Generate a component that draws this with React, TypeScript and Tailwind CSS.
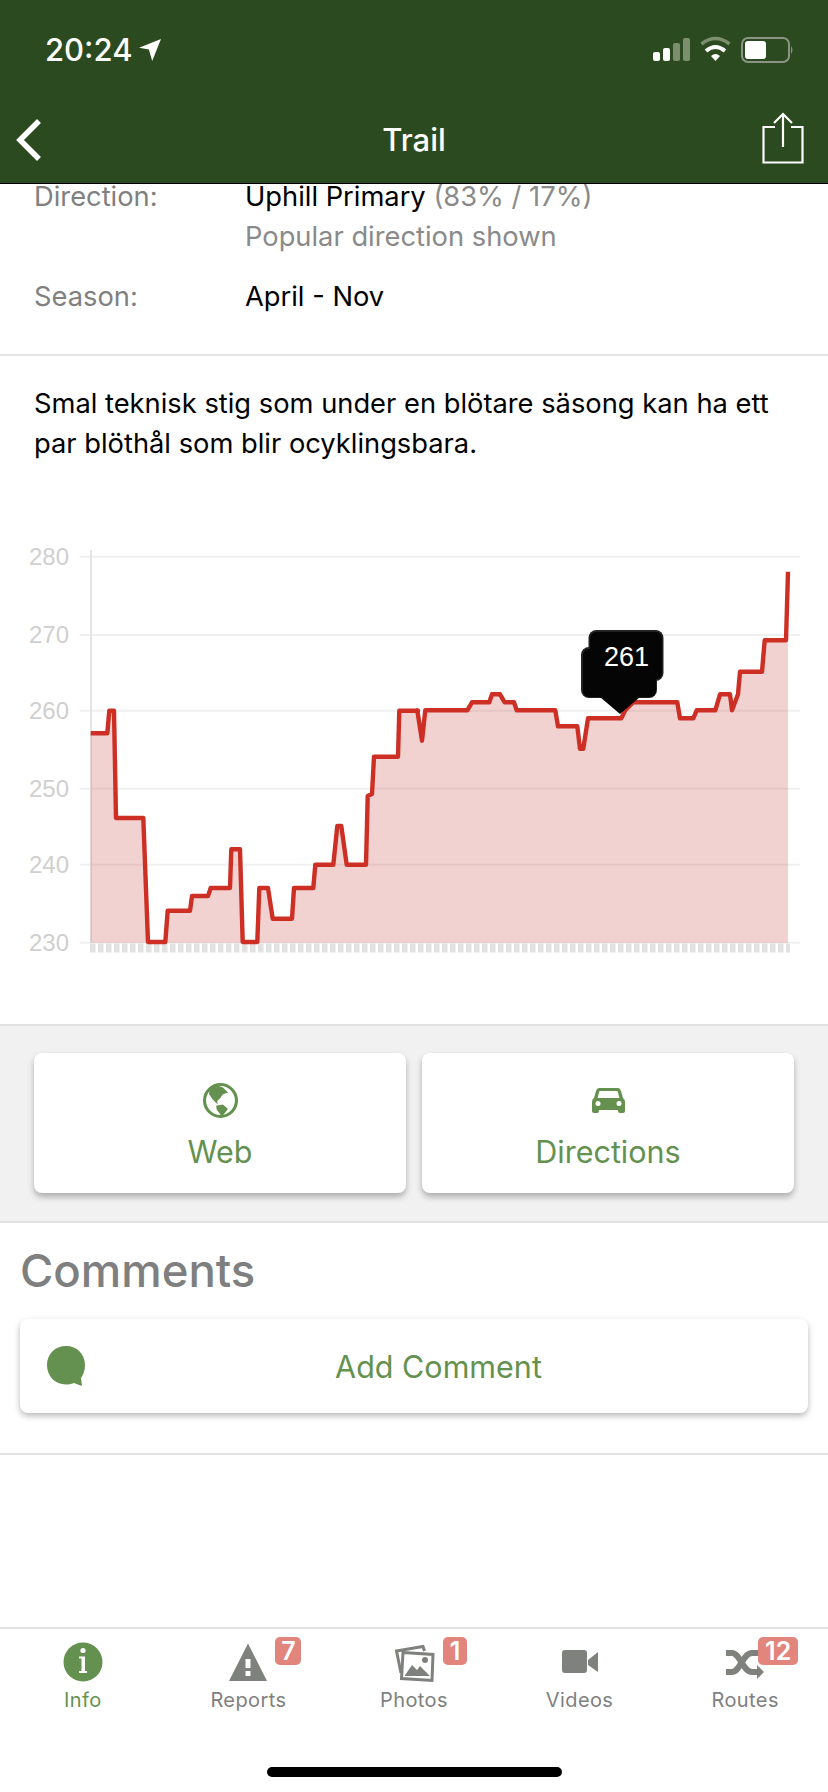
const left: [number, number][] = [[272,610],[322,610],[328,542],[342,542],[348,864],[430,864],[444,1236],[496,1236],[503,1142],[570,1142],[576,1098],[624,1098],[632,1074],[690,1074],[694,958],[720,958],[728,1236],[772,1236],[778,1074],[804,1074],[818,1166],[876,1166],[882,1074],[940,1074],[946,1004],[1000,1004],[1012,888],[1024,888],[1040,1004],[1098,1004],[1103,798],[1116,792],[1122,680],[1194,680],[1198,542],[1254,542]];
const right: [number, number][] = [[22,541],[36,632],[46,541],[172,541],[186,517],[238,517],[246,493],[270,493],[284,517],[312,517],[320,541],[436,541],[444,589],[502,589],[510,656],[520,656],[534,565],[634,565],[646,541],[670,517],[802,517],[810,565],[850,565],[860,541],[916,541],[930,493],[960,493],[966,541],[984,493],[990,425],[1056,425],[1064,331],[1128,331],[1134,125]];
const pts = [
  ...left.map(([x, y]) => [x / 3, 530 + y / 3]),
  ...right.map(([x, y]) => [410 + x / 3, 530 + y / 3]),
];
const line = pts.map(([x, y]) => `${x.toFixed(1)},${y.toFixed(1)}`).join(" ");
const area = `M90.7,942.7 L${line.replace(/ /g, " L")} L788,942.7 Z`;
const grid: [string, number][] = [["280", 556.7], ["270", 635], ["260", 710.7], ["250", 788.7], ["240", 864.7], ["230", 942.7]];

function Chart() {
  return (
    <svg viewBox="0 466 828 558" className="block w-[828px] h-[558px] mt-[2px]">
      {grid.map(([label, y]) => (
        <g key={label}>
          <line x1="80" x2="800" y1={y} y2={y} stroke="#f0f0f0" strokeWidth="2" />
          <text x="29" y={y + 8} fontSize="24" fill="#cfcfcf" fontFamily="'Liberation Sans', sans-serif">{label}</text>
        </g>
      ))}
      <line x1="91" x2="91" y1="550" y2="943" stroke="#e4e4e4" strokeWidth="2" />
      <line x1="90" x2="790" y1="948" y2="948" stroke="#e2e2e2" strokeWidth="9" strokeDasharray="5.5 2.5" />
      <path d={area} fill="#c02a25" fillOpacity="0.21" />
      <polyline points={line} fill="none" stroke="#cd2f25" strokeWidth="4.4" strokeLinejoin="round" />
      <rect x="581" y="647" width="76" height="51" rx="8" fill="#222222" />
      <rect x="588.5" y="630" width="75" height="51" rx="8" fill="#222222" />
      <rect x="583" y="649" width="73" height="48" rx="6" fill="#050505" />
      <rect x="590" y="632" width="72" height="47" rx="6" fill="#050505" />
      <path d="M600 697 L640 697 L620 714 Z" fill="#050505" />
      <text x="626.5" y="666" textAnchor="middle" fontSize="27" fill="#ffffff" fontFamily="'Liberation Sans', sans-serif">261</text>
    </svg>
  );
}

function StatusIcons() {
  return (
    <svg width="141" height="30" viewBox="653 35 141 30" className="block">
      <rect x="653" y="52" width="7" height="9" rx="2" fill="#fff" />
      <rect x="663" y="48" width="7" height="13" rx="2" fill="#fff" />
      <rect x="673" y="43" width="7" height="18" rx="2" fill="#7b8f6f" />
      <rect x="683" y="38" width="7" height="23" rx="2" fill="#7b8f6f" />
      <path d="M701.5 44 Q715.5 33 729.5 44" fill="none" stroke="#7b8f6f" strokeWidth="3.5" />
      <path d="M706 51 Q715.5 43 725 51" fill="none" stroke="#fff" strokeWidth="4" />
      <path d="M711 56 Q715.5 52 720 56 L715.5 61 Z" fill="#fff" />
      <rect x="742" y="38" width="47" height="24" rx="6" fill="none" stroke="#8a9484" strokeWidth="2" />
      <rect x="745" y="41" width="21" height="18" rx="3" fill="#fff" />
      <path d="M791 46 Q794 50 791 54 Z" fill="#8a9484" />
    </svg>
  );
}

function GlobeIcon() {
  return (
    <svg viewBox="0 0 34 34" className="w-[35px] h-[35px]" fill="#64914f">
      <circle cx="17" cy="17" r="15.500" fill="none" stroke="#64914f" strokeWidth="3" />
      <path d="M6 4.300 L12.700 2 L19.400 4.300 L24.300 9.300 L19.400 11 L17 14.300 L13.700 17.700 L14.400 21 L9.400 16 L6 11 Z" />
      <path d="M12.700 22 L19.400 21 L24.300 25.300 L21 29.300 L18.400 32.700 L16 29.300 L13.400 26 Z" />
    </svg>
  );
}
function CarIcon() {
  return (
    <svg viewBox="0 0 33 27" className="w-[33px] h-[27px]">
      <path d="M7 1 H26 Q28 1 29 4 L31 11 Q33 12 33 15 V24 Q33 26 31 26 H28 Q26 26 26 24 V23 H7 V24 Q7 26 5 26 H2 Q0 26 0 24 V15 Q0 12 2 11 L4 4 Q5 1 7 1 Z" fill="#64914f" />
      <path d="M7.500 4 H25.500 L27.500 11 H5.500 Z" fill="#fff" />
      <circle cx="6" cy="16.500" r="2.500" fill="#fff" />
      <circle cx="27" cy="16.500" r="2.500" fill="#fff" />
    </svg>
  );
}
function InfoIcon() {
  return (
    <svg viewBox="0 0 44 44" className="w-[44px] h-[44px]">
      <circle cx="22" cy="22" r="19.5" fill="#64914f" />
      <circle cx="22" cy="10.5" r="2.6" fill="#fff" />
      <path d="M18 16.5 H24 V31 H26 V33 H18 V31 H20.5 V18.5 H18 Z" fill="#fff" />
    </svg>
  );
}
function WarnIcon() {
  return (
    <svg viewBox="0 0 44 44" className="w-[44px] h-[44px]">
      <path d="M22 3.5 L41 41 H3 Z" fill="#7f817d" />
      <rect x="19.5" y="19" width="5" height="9" fill="#fff" />
      <rect x="19.5" y="31" width="5" height="5" fill="#fff" />
    </svg>
  );
}
function PhotosIcon() {
  return (
    <svg viewBox="0 0 44 44" className="w-[44px] h-[44px]">
      <path d="M9 33 L4.5 11 L31 6.5 L32.5 11" fill="none" stroke="#7f817d" strokeWidth="3" />
      <path d="M11 12.5 L41 14.5 L40 40.5 L9.5 38.5 Z" fill="#fff" stroke="#7f817d" strokeWidth="3" />
      <circle cx="33" cy="20" r="3" fill="#7f817d" />
      <path d="M12.5 36 L20 25 L25 30 L28 26 L38 36 Z" fill="#7f817d" />
    </svg>
  );
}
function VideoIcon() {
  return (
    <svg viewBox="0 0 44 44" className="w-[44px] h-[44px]">
      <rect x="4" y="10" width="25" height="23" rx="3" fill="#7f817d" />
      <path d="M30 20 L40 12 V32 L30 25 Z" fill="#7f817d" />
    </svg>
  );
}
function ShuffleIcon() {
  return (
    <svg viewBox="0 0 44 44" className="w-[44px] h-[44px]">
      <path d="M3 13 H9 C17 13 20 32 29 32 H36" fill="none" stroke="#7f817d" strokeWidth="6" />
      <path d="M3 32 H9 C17 32 20 13 29 13 H36" fill="none" stroke="#7f817d" strokeWidth="6" />
      <path d="M34 25 L41 32 L34 39 Z" fill="#7f817d" />
    </svg>
  );
}

function Tab({ label, icon, active, badge }: { label: string; icon: React.ReactNode; active?: boolean; badge?: React.ReactNode }) {
  return (
    <div className="relative flex-1 flex flex-col items-center pt-[11px]">
      {icon}
      <span className={`mt-[4px] text-[20px] leading-[24px] tracking-[0.4px] ${active ? "text-[#64914f]" : "text-[#808080]"}`}>{label}</span>
      {badge}
    </div>
  );
}

const badgeBase = "absolute top-[8px] left-1/2 h-[28px] rounded-[5px] bg-[#e2857d] text-white text-[25px] leading-[28px] font-semibold text-center";

export default function App() {
  return (
    <div className="w-[828px] h-[1792px] bg-white flex flex-col overflow-hidden font-['Inter',sans-serif]">
      <header className="h-[184px] shrink-0 bg-[#2c4a1f] border-b border-black text-white">
        <div className="h-[100px] flex items-center justify-between pl-[45px] pr-[34px]">
          <div className="flex items-center gap-[7px]">
            <span className="text-[31px] leading-[36px] font-medium">20:24</span>
            <svg viewBox="0 0 20 20" className="w-[22px] h-[22px]"><path d="M0 8 L20 0 L12 20 L9 9.500 Z" fill="#fff" /></svg>
          </div>
          <StatusIcons />
        </div>
        <div className="h-[83px] flex items-center pb-[3px]">
          <div className="w-[120px] pl-[14px]">
            <svg viewBox="0 0 32 44" className="w-[32px] h-[44px] block"><path d="M25 3 L6 22 L25 41" fill="none" stroke="#fff" strokeWidth="5.5" /></svg>
          </div>
          <div className="flex-1 text-center text-[31px] leading-[40px] font-medium">Trail</div>
          <div className="w-[120px] flex justify-end pr-[24px]">
            <svg viewBox="0 0 42 52" className="w-[42px] h-[52px] block -mt-[4px]">
              <path d="M13 15 H1.5 V50.5 H40.5 V15 H29" fill="none" stroke="#fff" strokeWidth="2.2" />
              <path d="M21 2 V35" fill="none" stroke="#fff" strokeWidth="2.2" />
              <path d="M12 11 L21 2 L30 11" fill="none" stroke="#fff" strokeWidth="2.2" />
            </svg>
          </div>
        </div>
      </header>

      <section className="border-b-2 border-[#e4e4e4] h-[172px] shrink-0 px-[34px] text-[27.3px]">
        <div className="flex">
          <div className="w-[211px] text-[#808080] leading-[26px]">Direction:</div>
          <div>
            <div className="text-black leading-[26px]">Uphill Primary <span className="text-[#8a8a8a]">(83% / 17%)</span></div>
            <div className="text-[#8a8a8a] leading-[40px] mt-[7px]">Popular direction shown</div>
          </div>
        </div>
        <div className="flex mt-[20px] leading-[40px]">
          <div className="w-[211px] text-[#808080]">Season:</div>
          <div className="text-black">April - Nov</div>
        </div>
      </section>

      <section className="shrink-0">
        <p className="pt-[28px] px-[34px] text-[27.3px] leading-[40px] text-black">
          Smal teknisk stig som under en blötare säsong kan ha ett<br />par blöthål som blir ocyklingsbara.
        </p>
        <Chart />
      </section>

      <section className="shrink-0 h-[199px] bg-[#f1f1f1] border-y-2 border-[#e2e2e2] flex gap-[16px] px-[34px] pt-[27px]">
        {[
          { label: "Web", icon: <GlobeIcon /> },
          { label: "Directions", icon: <CarIcon /> },
        ].map((b) => (
          <div key={b.label} className="flex-1 h-[140px] bg-white rounded-[8px] shadow-[0_4px_6px_rgba(0,0,0,0.28)] flex flex-col items-center pt-[30px] text-[#64914f]">
            <div className="h-[35px] flex items-center">{b.icon}</div>
            <div className="mt-[14px] text-[30.5px] leading-[40px]">{b.label}</div>
          </div>
        ))}
      </section>

      <section className="shrink-0 h-[232px] border-b-2 border-[#e2e2e2] px-[20px]">
        <h2 className="pt-[22px] text-[45.5px] leading-[52px] font-medium text-[#7f7f7f]">Comments</h2>
        <div className="mt-[22px] h-[94px] bg-white rounded-[8px] shadow-[0_3px_6px_rgba(0,0,0,0.28)] flex items-center pl-[26px] pr-[26px]">
          <svg viewBox="0 0 40 42" className="w-[40px] h-[42px] shrink-0">
            <path d="M20 1 C31 1 39 9 39 20 C39 26 37 30 35 33 L36 41 L28 38 C25 39 22 39.500 20 39.500 C9 39.500 1 31 1 20 C1 9 9 1 20 1 Z" fill="#64914f" />
          </svg>
          <div className="flex-1 text-center text-[#64914f] text-[30.5px] leading-[40px] pl-[9px] pt-[2px]">Add Comment</div>
        </div>
      </section>

      <div className="flex-1" />

      <footer className="shrink-0 h-[165px] border-t-2 border-[#e2e2e2] relative">
        <div className="flex">
          <Tab label="Info" active icon={<InfoIcon />} />
          <Tab label="Reports" icon={<WarnIcon />} badge={<span className={`${badgeBase} w-[26px] ml-[27px]`}>7</span>} />
          <Tab label="Photos" icon={<PhotosIcon />} badge={<span className={`${badgeBase} w-[24px] ml-[29px]`}>1</span>} />
          <Tab label="Videos" icon={<VideoIcon />} />
          <Tab label="Routes" icon={<ShuffleIcon />} badge={<span className={`${badgeBase} w-[40px] ml-[13px]`}>12</span>} />
        </div>
        <div className="absolute left-[267px] top-[138px] w-[295px] h-[10px] rounded-full bg-black" />
      </footer>
    </div>
  );
}
